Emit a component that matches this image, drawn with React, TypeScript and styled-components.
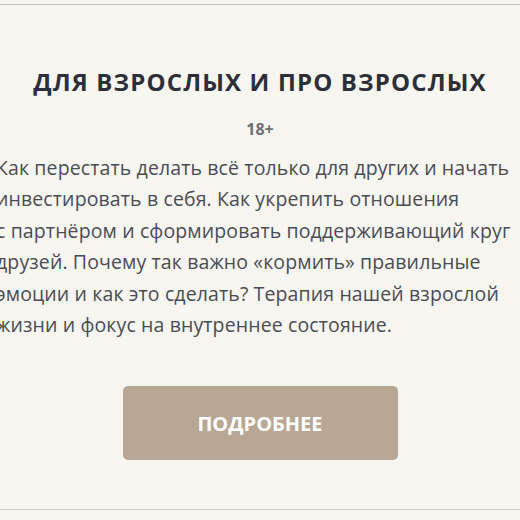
import React from "react";
import styled, { createGlobalStyle } from "styled-components";

const Global = createGlobalStyle`
  html, body { margin: 0; padding: 0; background: #f7f5f0; overflow: hidden; }
  body { width: 520px; height: 520px; }
`;

const Section = styled.section`
  margin-top: 4px;
  height: 506px;
  box-sizing: border-box;
  border-top: 1px solid #c9c0b3;
  border-bottom: 1px solid #d3ccbf;
  background: #f7f5f0;
  display: flex;
  flex-direction: column;
  align-items: center;
  padding-top: 62px;
  font-family: "Open Sans", "Liberation Sans", sans-serif;
`;

const Title = styled.h2`
  margin: 0;
  font-size: 24px;
  line-height: 30px;
  font-weight: 700;
  color: #2c2f38;
  letter-spacing: 1.15px;
  white-space: nowrap;
`;

const Age = styled.div`
  margin-top: 22px;
  font-size: 16px;
  line-height: 20px;
  font-weight: 700;
  color: #6d6f76;
`;

const Text = styled.p`
  margin: 13px 0 0;
  width: 528px;
  flex-shrink: 0;
  font-size: 19.5px;
  line-height: 31.4px;
  letter-spacing: 0.12px;
  color: #4a4c54;
  text-align: left;
  white-space: nowrap;
`;

const Button = styled.a`
  margin-top: 46px;
  width: 275px;
  height: 74px;
  border-radius: 5px;
  background: #b8a794;
  color: #ffffff;
  display: flex;
  align-items: center;
  justify-content: center;
  font-size: 20px;
  font-weight: 700;
  text-decoration: none;
`;

const lines = [
  "Как перестать делать всё только для других и начать",
  "инвестировать в себя. Как укрепить отношения",
  "с партнёром и сформировать поддерживающий круг",
  "друзей. Почему так важно «кормить» правильные",
  "эмоции и как это сделать? Терапия нашей взрослой",
  "жизни и фокус на внутреннее состояние.",
];

export default function App() {
  return (
    <>
      <Global />
      <Section>
        <Title>ДЛЯ ВЗРОСЛЫХ И ПРО ВЗРОСЛЫХ</Title>
        <Age>18+</Age>
        <Text>
          {lines.map((l, i) => (
            <React.Fragment key={i}>
              {l}
              {i < lines.length - 1 && <br />}
            </React.Fragment>
          ))}
        </Text>
        <Button href="#">ПОДРОБНЕЕ</Button>
      </Section>
    </>
  );
}
